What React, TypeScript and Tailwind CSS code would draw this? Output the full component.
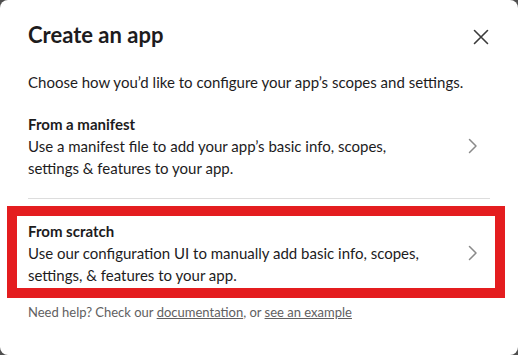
const Chevron = () => (
  <svg width="10" height="16" viewBox="0 0 10 16" fill="none" className="shrink-0">
    <path d="M1.5 1.5 L8 8 L1.5 14.5" stroke="#8a8a8a" strokeWidth="1.5" strokeLinecap="round" strokeLinejoin="round" />
  </svg>
);

const CloseIcon = () => (
  <svg width="16" height="16" viewBox="0 0 16 16" fill="none">
    <path d="M1.5 1.5 L14.5 14.5 M14.5 1.5 L1.5 14.5" stroke="#3b3b3b" strokeWidth="1.6" strokeLinecap="round" />
  </svg>
);

export default function App() {
  return (
    <div className="w-[518px] h-[355px] bg-[#4f4f4f] font-['Lato','Noto_Sans',sans-serif] text-[#1d1c1d]">
      <div className="h-full rounded-[8px] bg-white px-[28px] pt-[21px]">
        <div className="flex items-center justify-between">
          <h1 className="text-[22px] leading-[28px] font-bold">Create an app</h1>
          <button className="mr-[1px] mt-[3px]">
            <CloseIcon />
          </button>
        </div>

        <p className="mt-[22px] text-[15px] leading-[22px]">
          Choose how you’d like to configure your app’s scopes and settings.
        </p>

        <div className="mt-[20px] flex items-center justify-between pb-[19px] border-b border-[#dddddd]">
          <div className="text-[15px] leading-[22px]">
            <p className="font-bold">From a manifest</p>
            <p>
              Use a manifest file to add your app’s basic info, scopes,
              <br />
              settings &amp; features to your app.
            </p>
          </div>
          <div className="mr-[12px]">
            <Chevron />
          </div>
        </div>

        <div className="mt-[7px] -ml-[21px] -mr-[15px] flex items-center justify-between border-[10px] border-[#e41d1f] pl-[11px] pt-[4px] pb-[2px]">
          <div className="text-[15px] leading-[22px]">
            <p className="font-bold">From scratch</p>
            <p>
              Use our configuration UI to manually add basic info, scopes,
              <br />
              settings, &amp; features to your app.
            </p>
          </div>
          <div className="mr-[17px]">
            <Chevron />
          </div>
        </div>

        <p className="mt-[5px] text-[13px] leading-[18px] text-[#616061]">
          Need help? Check our <a className="underline">documentation</a>, or{' '}
          <a className="underline">see an example</a>
        </p>
      </div>
    </div>
  );
}
